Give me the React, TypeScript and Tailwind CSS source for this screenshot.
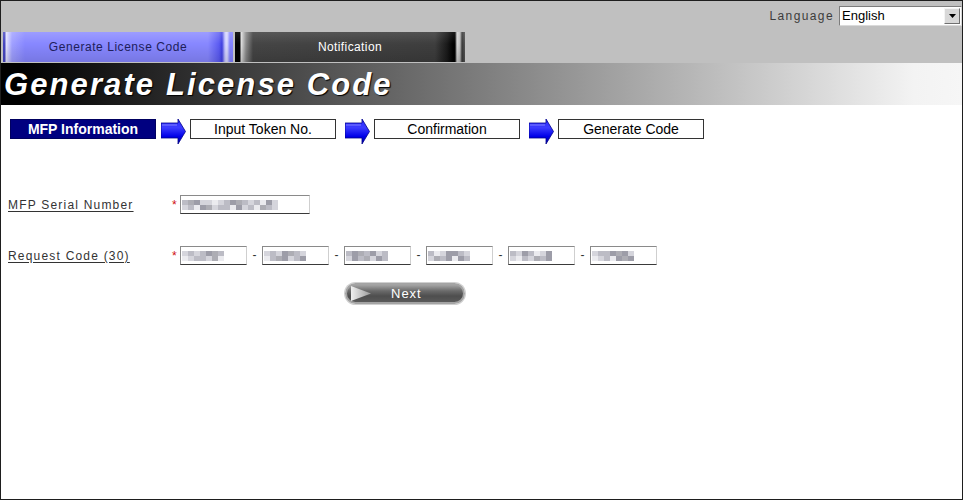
import React from "react";

// pixelated placeholder for the blurred values in the inputs
const shades: Record<string, string> = {
  a: "bg-[#9d9da8]",
  b: "bg-[#bcbcc5]",
  c: "bg-[#d5d5dc]",
  d: "bg-[#ebebef]",
  e: "bg-[#adadb4]",
};

const Blur: React.FC<{ rows: string[] }> = ({ rows }) => (
  <div className="flex flex-col">
    {rows.map((row, i) => (
      <div key={i} className="flex">
        {row.split("").map((ch, j) => (
          <span key={j} className={`w-[6px] h-[5px] ${shades[ch] ?? "bg-white"}`} />
        ))}
      </div>
    ))}
  </div>
);

const FieldBox: React.FC<{ width: string; rows: string[] }> = ({ width, rows }) => (
  <div
    className={`${width} h-[19px] bg-white border border-t-[#8a8a8a] border-l-[#8a8a8a] border-b-[#3a3a3a] border-r-[#cfcfcf] flex items-center pl-[1px]`}
  >
    <Blur rows={rows} />
  </div>
);

const StepArrow: React.FC<{ first?: boolean }> = ({ first }) => (
  <div className={first ? "w-[34px] h-[25px] flex pl-[5px]" : "w-[38px] h-[25px] flex pl-[9px]"}>
    <svg width="25" height="25" viewBox="0 0 25 25">
      <defs>
        <linearGradient id="ab" x1="0" y1="0" x2="0" y2="1">
          <stop offset="0" stopColor="#2a2aff" />
          <stop offset="0.35" stopColor="#3b3bff" />
          <stop offset="0.7" stopColor="#0000e8" />
          <stop offset="1" stopColor="#00009a" />
        </linearGradient>
      </defs>
      <polygon points="0,4 17,4 17,0 24.5,12.5 17,25 17,19 0,19" fill="url(#ab)" stroke="#00008a" strokeWidth="0.8" />
      <line x1="1" y1="6" x2="16" y2="6" stroke="#8080ff" strokeWidth="1" />
    </svg>
  </div>
);

const Step: React.FC<{ label: string; active?: boolean }> = ({ label, active }) => (
  <div
    className={
      active
        ? "w-[146px] h-[20px] bg-[#000080] border border-[#000060] text-white font-bold text-[14px] leading-[18px] text-center"
        : "w-[146px] h-[20px] bg-white border border-[#333] text-black text-[14px] leading-[18px] text-center"
    }
  >
    {label}
  </div>
);

const Dash: React.FC = () => (
  <div className="w-[15px] text-center text-[12px] text-[#333] leading-[19px]">-</div>
);

export default function App() {
  return (
    <div className="w-[963px] h-[500px] border border-[#1e1e1e] bg-white font-['Liberation_Sans',Arial,sans-serif] flex flex-col overflow-hidden">
      {/* top bar */}
      <div className="bg-[#c0c0c0] h-[62px] flex flex-col">
        <div className="flex justify-end items-center pt-[5px] h-[25px]">
          <span className="text-[12px] tracking-[1.4px] text-[#3c3c3c] mr-[5px]">Language</span>
          <div className="w-[123px] h-[20px] bg-white border border-t-[#7c7c7c] border-l-[#7c7c7c] border-b-[#dadada] border-r-[#dadada] flex items-center">
            <span className="flex-1 text-[13px] text-black pl-[2px] leading-[18px]">English</span>
            <div className="w-[16px] h-[16px] mr-[1px] bg-[#d8d8d8] border border-t-[#f4f4f4] border-l-[#f4f4f4] border-b-[#707070] border-r-[#707070] flex items-center justify-center">
              <svg width="7" height="4" viewBox="0 0 7 4">
                <polygon points="0,0 7,0 3.5,4" fill="#000" />
              </svg>
            </div>
          </div>
        </div>
        <div className="flex pl-[2px] mt-[6px] gap-[2px]">
          <div className="w-[230px] h-[30px] bg-[linear-gradient(to_bottom,rgba(255,255,255,0.18),rgba(255,255,255,0)_40%,rgba(0,0,20,0.12)),linear-gradient(to_right,#4545c0_0px,#4545c0_2px,#e6e6ff_3px,#a0a0ff_9px,#8787ff_22px,#8787ff_205px,#5b5bf2_216px,#4040e0_219px,#c8c8ff_222px,#dcdcff_224px,#8282ff_227px,#8282ff_230px)] flex items-center justify-center text-[12px] text-[#20205a] tracking-[0.55px]">
            Generate License Code
          </div>
          <div className="w-[230px] h-[30px] bg-[linear-gradient(to_bottom,rgba(255,255,255,0.1),rgba(255,255,255,0)_40%,rgba(0,0,0,0.15)),linear-gradient(to_right,#000_0px,#000_5px,#e4e4e4_6px,#8a8a8a_11px,#454545_18px,#3e3e3e_200px,#1a1a1a_212px,#000_218px,#000_220px,#d6d6d6_222px,#bdbdbd_225px,#3a3a3a_227px,#555_230px)] flex items-center justify-center text-[12px] text-white tracking-[0.4px]">
            Notification
          </div>
        </div>
      </div>

      {/* title band */}
      <div className="h-[42px] bg-[linear-gradient(to_right,#000_2%,#f3f3f3_95%,#f6f6f6)] flex items-center pl-[3px]">
        <h1 className="text-[31px] font-bold italic text-white tracking-[2.1px] leading-none [text-shadow:1px_1px_1px_#000]">
          Generate License Code
        </h1>
      </div>

      {/* steps */}
      <div className="flex items-start pl-[9px] mt-[14px]">
        <Step label="MFP Information" active />
        <StepArrow first />
        <Step label="Input Token No." />
        <StepArrow />
        <Step label="Confirmation" />
        <StepArrow />
        <Step label="Generate Code" />
      </div>

      {/* form */}
      <div className="flex items-center pl-[7px] mt-[51px]">
        <span className="w-[164px] text-[12px] tracking-[1.2px] text-[#333] underline underline-offset-2">MFP Serial Number</span>
        <span className="w-[8px] text-[12px] text-[#d01010] leading-[12px]">*</span>
        <FieldBox width="w-[130px]" rows={["beaccdcbaebcbdac", "cbdaecbbdacbdebc"]} />
      </div>

      <div className="flex items-center pl-[7px] mt-[32px]">
        <span className="w-[164px] text-[12px] tracking-[1.2px] text-[#333] underline underline-offset-2">Request Code (30)</span>
        <span className="w-[8px] text-[12px] text-[#d01010] leading-[12px]">*</span>
        <FieldBox width="w-[67px]" rows={["cbcbaeb", "dcbbced"]} />
        <Dash />
        <FieldBox width="w-[67px]" rows={["cbcaebc", "dbeacba"]} />
        <Dash />
        <FieldBox width="w-[67px]" rows={["baebacb", "cabecab"]} />
        <Dash />
        <FieldBox width="w-[67px]" rows={["bdcaabc", "cebadab"]} />
        <Dash />
        <FieldBox width="w-[67px]" rows={["bcabdca", "cdbceba"]} />
        <Dash />
        <FieldBox width="w-[67px]" rows={["cbbaeac", "dcbdaea"]} />
      </div>

      <div className="pl-[344px] mt-[18px]">
        <button className="w-[120px] h-[21px] rounded-full border-[2px] border-[#a4a4a4] bg-[linear-gradient(to_bottom,#a4a4a4,#6a6a6a_35%,#4e4e4e_65%,#5a5a5a)] flex items-center relative shadow-[0_0_0_1px_#d0d0d0]">
          <svg width="22" height="15" viewBox="0 0 22 15" className="ml-[3px]">
            <defs>
              <linearGradient id="tri" x1="0" y1="0" x2="1" y2="0">
                <stop offset="0" stopColor="#f0f0f0" />
                <stop offset="1" stopColor="#9a9a9a" />
              </linearGradient>
            </defs>
            <polygon points="1,0 21,7.5 1,15" fill="url(#tri)" />
          </svg>
          <span className="ml-[19px] text-[13px] text-white tracking-[1px] leading-none">Next</span>
        </button>
      </div>
    </div>
  );
}
